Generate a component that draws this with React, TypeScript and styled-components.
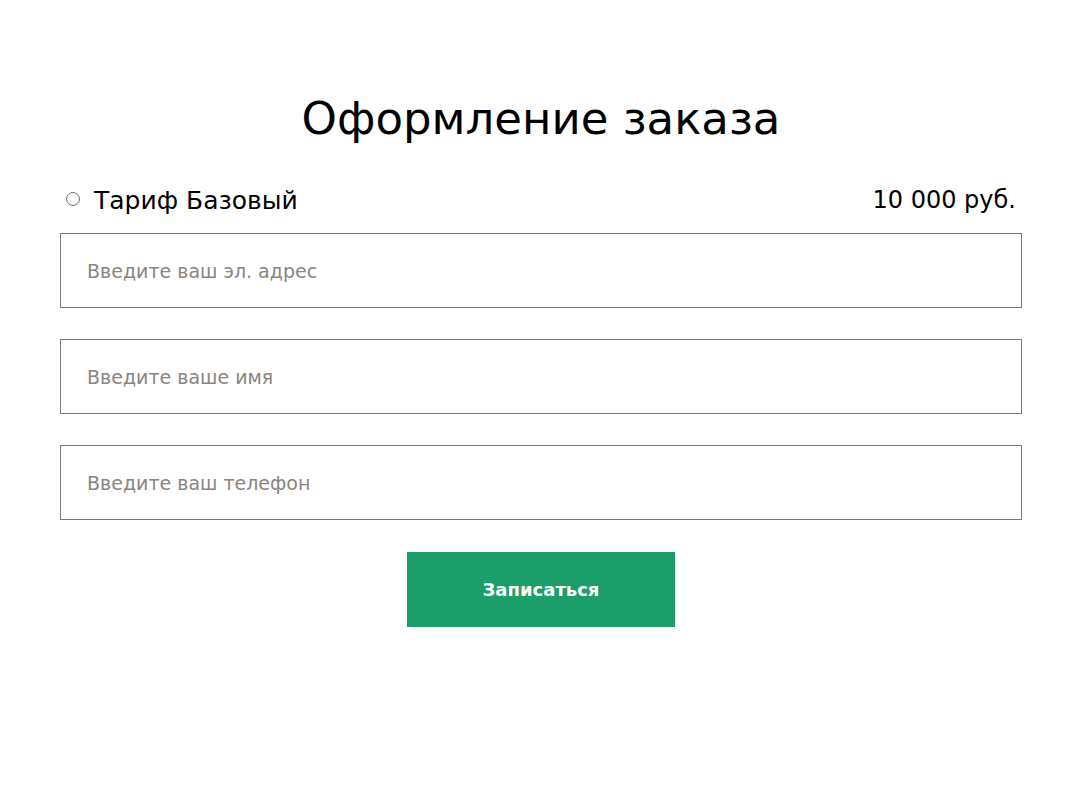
import styled, { createGlobalStyle } from "styled-components";

const GlobalStyle = createGlobalStyle`
  body {
    margin: 0;
    background: #fff;
    font-family: "DejaVu Sans", "Liberation Sans", sans-serif;
  }
`;

const Page = styled.div`
  width: 1085px;
  min-height: 811px;
`;

const Form = styled.form`
  width: 962px;
  margin-left: 60px;
  padding-top: 92px;
  display: flex;
  flex-direction: column;
`;

const Title = styled.h1`
  margin: 0;
  text-align: center;
  font-size: 45px;
  font-weight: 400;
  line-height: 54px;
  color: #000;
`;

const TariffRow = styled.div`
  margin-top: 38px;
  display: flex;
  align-items: center;
  justify-content: space-between;
  padding: 0 6px;
  height: 32px;
`;

const TariffLabel = styled.label`
  display: flex;
  align-items: center;
  gap: 14px;
  font-size: 25px;
  color: #000;
`;

const Radio = styled.span`
  width: 14px;
  height: 14px;
  border: 1px solid #6f6f6f;
  border-radius: 50%;
  box-sizing: border-box;
  margin-top: -3px;
`;

const Price = styled.span`
  font-size: 24px;
  color: #000;
`;

const Fields = styled.div`
  margin-top: 17px;
  display: flex;
  flex-direction: column;
  gap: 31px;
`;

const Input = styled.input`
  height: 75px;
  box-sizing: border-box;
  border: 1px solid #7a7a7a;
  padding: 0 26px;
  font-family: inherit;
  font-size: 19px;
  color: #000;
  outline: none;
  &::placeholder {
    color: #8a8580;
  }
`;

const Submit = styled.button`
  align-self: center;
  margin-top: 32px;
  width: 268px;
  height: 75px;
  border: none;
  background: #1b9e6a;
  color: #fff;
  font-family: inherit;
  font-size: 18px;
  font-weight: 600;
`;

export default function App() {
  return (
    <Page>
      <GlobalStyle />
      <Form>
        <Title>Оформление заказа</Title>
        <TariffRow>
          <TariffLabel>
            <Radio />
            Тариф Базовый
          </TariffLabel>
          <Price>10 000 руб.</Price>
        </TariffRow>
        <Fields>
          <Input placeholder="Введите ваш эл. адрес" />
          <Input placeholder="Введите ваше имя" />
          <Input placeholder="Введите ваш телефон" />
        </Fields>
        <Submit type="button">Записаться</Submit>
      </Form>
    </Page>
  );
}
